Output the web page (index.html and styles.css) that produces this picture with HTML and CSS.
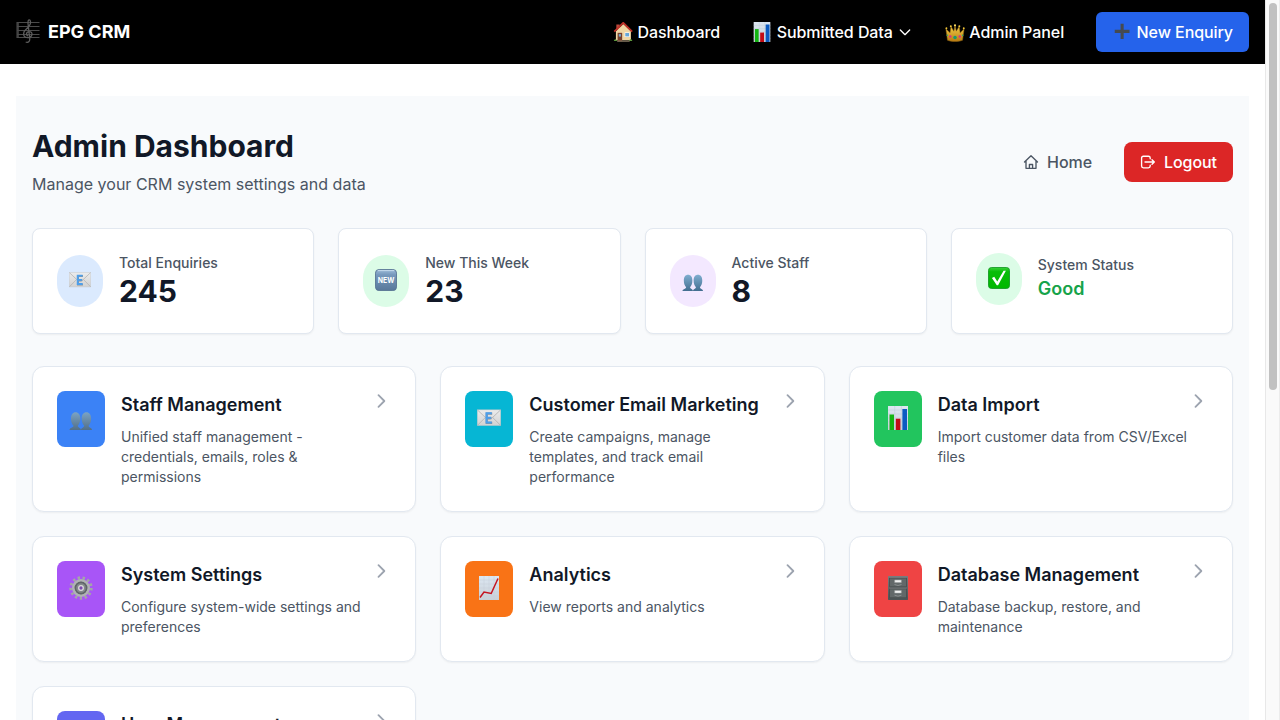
FILE: index.html
```html
<!DOCTYPE html>
<html lang="en">
<head>
<meta charset="utf-8">
<title>EPG CRM</title>
<link rel="stylesheet" href="styles.css">
</head>
<body>
<svg class="sprite" aria-hidden="true">
  <defs>
    <linearGradient id="g-blue" x1="0" y1="0" x2="0" y2="1"><stop offset="0" stop-color="#7faed0"/><stop offset="1" stop-color="#426d8f"/></linearGradient>
    <linearGradient id="g-slate" x1="0" y1="0" x2="0" y2="1"><stop offset="0" stop-color="#7ba3c4"/><stop offset="1" stop-color="#526f88"/></linearGradient>
    <linearGradient id="g-new" x1="0" y1="0" x2="0" y2="1"><stop offset="0" stop-color="#9dbbd8"/><stop offset=".25" stop-color="#7799bd"/><stop offset="1" stop-color="#58789a"/></linearGradient>
    <linearGradient id="g-paper" x1="0" y1="0" x2="0" y2="1"><stop offset="0" stop-color="#dce7f2"/><stop offset="1" stop-color="#c9d0d6"/></linearGradient>
    <linearGradient id="g-env" x1="0" y1="0" x2="0" y2="1"><stop offset="0" stop-color="#ececec"/><stop offset="1" stop-color="#d2d2d2"/></linearGradient>
    <linearGradient id="g-check" x1="0" y1="0" x2="0" y2="1"><stop offset="0" stop-color="#3bd03b"/><stop offset=".2" stop-color="#08bd08"/><stop offset="1" stop-color="#00b800"/></linearGradient>
    <linearGradient id="g-gold" x1="0" y1="0" x2="0" y2="1"><stop offset="0" stop-color="#f6d34a"/><stop offset="1" stop-color="#b87a12"/></linearGradient>
    <linearGradient id="g-cab" x1="0" y1="0" x2="0" y2="1"><stop offset="0" stop-color="#777d7f"/><stop offset="1" stop-color="#4d5355"/></linearGradient>
  </defs>
  <symbol id="score" viewBox="0 0 24 24">
    <path d="M1 3v16M2.200 3v16M.5 3.500h23M.5 7.500h23M.5 11.500h23M.5 15.500h23M.5 18.500h23" fill="none" stroke="#4a4a4a" stroke-width="1.100"/>
    <path d="M8 12.800C10 9.500 15 7.200 14.500 3c-.3-3.500-2.800-2.400-2.500 1.200l1.700 15c.4 3.600-1.600 4.800-4 3.800M8.200 12.500c-1.600 4 .4 6.300 3.700 6.100 5.200-.3 5.200-6.200 1.300-6-3.400.3-3.400 4-1 4.200" fill="none" stroke="#5c5c5c" stroke-width="1.300"/>
  </symbol>
  <symbol id="house" viewBox="0 0 24 24">
    <path d="M4 3h4v6H4z" fill="#b94a3c"/>
    <path d="M3.500 11 12.500 2.500 21.500 11v11h-18z" fill="#efd6a4"/>
    <path d="M1.500 11.500 12.300 1 23 11.500" fill="none" stroke="#bd3028" stroke-width="2.200"/>
    <path d="M5.500 13h5.500v10H5.500z" fill="#77402d"/><path d="M7 14.500h2.500v3H7z" fill="#79a9cc"/>
    <path d="M14 12.500h6v5.500h-6z" fill="#fff"/><path d="M14.700 13.200h4.600v4.100h-4.600z" fill="#66a7d8"/>
    <path d="M1 22.800c1-3 3-2.500 4 0M19 22.800c1-2.500 3.500-2.800 4.200 0" fill="#5e993d"/><path d="M5 23h15" stroke="#9b8a70" stroke-width="1.200"/>
  </symbol>
  <symbol id="bars" viewBox="0 0 24 24">
    <path d="M2 0h20v24H2z" fill="url(#g-paper)"/>
    <path d="M2 4h20M2 8h20M2 12h20M2 16h20M2 20h20M8.700 0v24M15.400 0v24" stroke="#bccbd9" stroke-width=".5"/>
    <path d="M3.500 8.500H8V24H3.500z" fill="#13b413"/><path d="M9.800 12.700h4.600V24H9.800z" fill="#c30c15"/><path d="M16.400 3H21v21h-4.600z" fill="#0b5bc2"/>
  </symbol>
  <symbol id="crown" viewBox="0 0 24 24">
    <path d="M3 22 1 8l5 5 1.200-7.500 3.500 5.500L12 4l1.500 7L17 5.500 18.200 13 23 8l-2 14c-5 2-13 2-18 0z" fill="url(#g-gold)" stroke="#8f6515" stroke-width=".6"/>
    <circle cx="1.700" cy="7.500" r="1.100" fill="#f0c539"/><circle cx="7" cy="5" r="1.200" fill="#f0c539"/><circle cx="12" cy="4" r="1.300" fill="#ffdf62"/><circle cx="17.200" cy="5" r="1.200" fill="#f0c539"/><circle cx="22.500" cy="7.500" r="1.100" fill="#f0c539"/>
    <circle cx="12" cy="18.500" r="2.100" fill="#139a75"/><circle cx="6.300" cy="17.500" r="1.500" fill="#d72f87"/><circle cx="17.700" cy="17.500" r="1.500" fill="#d72f87"/><circle cx="2.800" cy="16" r="1" fill="#2ba677"/><circle cx="21.200" cy="16" r="1" fill="#2ba677"/>
  </symbol>
  <symbol id="plus" viewBox="0 0 24 24"><path d="M10.300 2h3.700v7.400h7v3.700h-7v7.400h-3.700v-7.400h-7V9.400h7z" fill="#454a50"/></symbol>
  <symbol id="mail" viewBox="0 0 24 24">
    <path d="M.3 3.800h23.400v15.700H.3z" fill="url(#g-env)" stroke="#c4c4c4" stroke-width=".5"/>
    <path d="m.5 4 9 8.500q2.500 2 5 0l9-8.500M.5 19.300 8.300 11.500M23.500 19.300l-7.800-7.800" fill="none" stroke="#b0b0b0" stroke-width=".8"/>
    <path d="M15.200 7.700H9.800v9.100h5.400M10 12.200h4.500" fill="none" stroke="#8b9299" stroke-width="2.200"/>
    <path d="M14.800 7.300H9.500v9.100h5.300M9.700 11.800h4.500" fill="none" stroke="#4c9fec" stroke-width="2"/>
  </symbol>
  <symbol id="people" viewBox="0 0 24 24">
    <path d="M.5 24c0-2.400 4-2.200 4-4.200C2.700 18 2 15.500 2 12.500 2 8.500 3.800 6.200 6.600 6.200s4.700 2.300 4.700 6.300c0 3-.8 5.500-2.500 7.300 0 1.800 3 1.800 3.200 4.200zm11.500 0c.2-2.400 3.200-2.400 3.200-4.200-1.700-1.800-2.500-4.300-2.500-7.300 0-4 1.800-6.300 4.700-6.300 2.800 0 4.700 2.300 4.700 6.300 0 3-.8 5.500-2.500 7.300 0 2 3.400 1.800 3.400 4.200z"/>
  </symbol>
  <symbol id="check" viewBox="0 0 24 24">
    <rect x=".5" y=".5" width="23" height="23" rx="3.500" fill="url(#g-check)" stroke="#169b26"/>
    <path d="m4.300 12 2.500-1.300 3.300 5L17 4.200h2.500L11 20H9.600z" fill="#fff"/>
  </symbol>
  <symbol id="gear" viewBox="0 0 24 24">
    <circle cx="12" cy="12" r="10.200" fill="none" stroke="#a3a6a8" stroke-width="3" stroke-dasharray="2.400 2.530"/>
    <circle cx="12" cy="12" r="7.600" fill="#777c80" stroke="#b0b2b4" stroke-width="2.800"/>
    <circle cx="12" cy="12" r="5.600" fill="#84898c" stroke="#5f6568" stroke-width="1.600"/>
    <circle cx="12" cy="12" r="2.300" fill="#7d4bb0" stroke="#dcdcdc" stroke-width="1.300"/>
  </symbol>
  <symbol id="trend" viewBox="0 0 24 24">
    <path d="M2 0h20v24H2z" fill="url(#g-paper)"/>
    <path d="M2 4h20M2 8h20M2 12h20M2 16h20M2 20h20M7 0v24M12 0v24M17 0v24" stroke="#c5cfd8" stroke-width=".5"/>
    <path d="m3 21.500 4-5.500 7.200 1.500L21 2.500" fill="none" stroke="#c51521" stroke-width="1.500"/>
  </symbol>
  <symbol id="cabinet" viewBox="0 0 24 24">
    <rect x="2" y="0" width="20" height="24" rx=".7" fill="url(#g-cab)"/>
    <path d="M3.500 2h17v8.800h-17zM3.500 12.800h17v9h-17z" fill="#626869" stroke="#464b4d" stroke-width=".8"/>
    <path d="M3.500 1.500h17M3.500 12.300h17" stroke="#7d8283" stroke-width=".6"/>
    <path d="M8.700 4h6.600v2.600H8.700zM8.700 14.500h6.600v2.600H8.700z" fill="#f0f0f0" stroke="#9da1a2" stroke-width=".5"/>
    <path d="M8.500 8.500q3.500 2 7 0M8.500 19.200q3.500 2 7 0" fill="none" stroke="#8d9293" stroke-width=".9"/>
  </symbol>
  <symbol id="chevron" viewBox="0 0 24 24"><path d="m9 5 7 7-7 7" fill="none" stroke="currentColor" stroke-width="2.200" stroke-linecap="round" stroke-linejoin="round"/></symbol>
</svg>

<div class="page">
  <header class="navbar">
    <a class="brand"><svg class="brand-icon"><use href="#score"/></svg>EPG CRM</a>
    <nav class="nav-links">
      <a class="nav-link"><svg class="nav-icon"><use href="#house"/></svg>Dashboard</a>
      <a class="nav-link"><svg class="nav-icon"><use href="#bars"/></svg>Submitted Data<svg class="caret" viewBox="0 0 24 24"><path d="m5 9 7 7 7-7" fill="none" stroke="currentColor" stroke-width="2" stroke-linecap="round" stroke-linejoin="round"/></svg></a>
      <a class="nav-link"><svg class="nav-icon"><use href="#crown"/></svg>Admin Panel</a>
      <a class="nav-link new-enquiry"><svg class="nav-icon"><use href="#plus"/></svg>New Enquiry</a>
    </nav>
  </header>

  <main class="panel">
    <div class="panel-head">
      <div>
        <h1 class="title">Admin Dashboard</h1>
        <p class="subtitle">Manage your CRM system settings and data</p>
      </div>
      <div class="actions">
        <a class="action home"><svg class="action-icon" viewBox="0 0 16 16"><path d="M1.500 8 8 1.700 14.500 8M3 6.800v7.500h10V6.800M6.400 14.200v-3.700h3.200v3.700" fill="none" stroke="currentColor" stroke-width="1.350" stroke-linecap="round" stroke-linejoin="round"/></svg>Home</a>
        <a class="action logout"><svg class="action-icon" viewBox="0 0 16 16"><path d="M10.200 4.800V4q0-1.800-1.800-1.800h-5Q1.600 2.200 1.600 4v8q0 1.800 1.800 1.800h5q1.800 0 1.800-1.800v-.8M5 8h9.300M12 5.700 14.300 8 12 10.300" fill="none" stroke="currentColor" stroke-width="1.350" stroke-linecap="round" stroke-linejoin="round"/></svg>Logout</a>
      </div>
    </div>

    <section class="stats">
      <div class="stat"><span class="bubble blue-soft"><svg><use href="#mail"/></svg></span><div><p class="stat-label">Total Enquiries</p><p class="stat-value">245</p></div></div>
      <div class="stat">
        <span class="bubble green-soft"><svg viewBox="0 0 24 24">
          <rect x=".5" y=".5" width="23" height="23" rx="4" fill="url(#g-new)" stroke="#587493"/>
          <path d="M3 1.700h18" stroke="#bfd5e9" stroke-width="1.200"/>
          <text x="12" y="15.200" text-anchor="middle" textLength="18" lengthAdjust="spacingAndGlyphs" class="new-label">NEW</text>
        </svg></span>
        <div><p class="stat-label">New This Week</p><p class="stat-value">23</p></div>
      </div>
      <div class="stat"><span class="bubble purple-soft"><svg fill="url(#g-blue)"><use href="#people"/></svg></span><div><p class="stat-label">Active Staff</p><p class="stat-value">8</p></div></div>
      <div class="stat"><span class="bubble green-soft"><svg><use href="#check"/></svg></span><div><p class="stat-label">System Status</p><p class="stat-status">Good</p></div></div>
    </section>

    <section class="modules">
      <a class="module"><span class="tile blue"><svg fill="url(#g-slate)"><use href="#people"/></svg></span><div class="module-text"><h3>Staff Management</h3><p>Unified staff management - credentials, emails, roles &amp; permissions</p></div><svg class="chevron"><use href="#chevron"/></svg></a>
      <a class="module"><span class="tile cyan"><svg><use href="#mail"/></svg></span><div class="module-text"><h3>Customer Email Marketing</h3><p>Create campaigns, manage templates, and track email performance</p></div><svg class="chevron"><use href="#chevron"/></svg></a>
      <a class="module"><span class="tile green"><svg><use href="#bars"/></svg></span><div class="module-text"><h3>Data Import</h3><p>Import customer data from CSV/Excel files</p></div><svg class="chevron"><use href="#chevron"/></svg></a>
      <a class="module"><span class="tile purple"><svg><use href="#gear"/></svg></span><div class="module-text"><h3>System Settings</h3><p>Configure system-wide settings and preferences</p></div><svg class="chevron"><use href="#chevron"/></svg></a>
      <a class="module"><span class="tile orange"><svg><use href="#trend"/></svg></span><div class="module-text"><h3>Analytics</h3><p>View reports and analytics</p></div><svg class="chevron"><use href="#chevron"/></svg></a>
      <a class="module"><span class="tile red"><svg><use href="#cabinet"/></svg></span><div class="module-text"><h3>Database Management</h3><p>Database backup, restore, and maintenance</p></div><svg class="chevron"><use href="#chevron"/></svg></a>
      <a class="module"><span class="tile indigo"></span><div class="module-text"><h3>User Management</h3></div><svg class="chevron"><use href="#chevron"/></svg></a>
    </section>
  </main>
</div>
<div class="scrollbar"><div class="thumb"></div></div>
</body>
</html>
```

FILE: styles.css
```css
* { box-sizing: border-box; margin: 0; padding: 0; }
body {
  display: flex;
  width: 1280px;
  height: 720px;
  overflow: hidden;
  background: #fff;
  color: #111827;
  font: 16px/24px Inter, sans-serif;
}
svg { display: block; flex: none; }
.sprite { position: absolute; width: 0; height: 0; }
.page { width: 1265px; height: 720px; overflow: hidden; }

.navbar {
  display: flex;
  align-items: center;
  justify-content: space-between;
  height: 64px;
  padding: 0 16px;
  background: #000;
  color: #fff;
}
.brand { display: flex; align-items: center; gap: 8px; font-size: 18px; line-height: 28px; font-weight: 700; }
.brand-icon { width: 24px; height: 24px; margin-top: -2px; }
.nav-links { display: flex; align-items: center; gap: 32px; font-weight: 500; letter-spacing: -.075px; }
.nav-link { display: flex; align-items: center; }
.nav-icon { width: 20px; height: 20px; margin-right: 4.500px; }
.caret { width: 16px; height: 16px; margin-left: 4px; }
.new-enquiry { height: 40px; padding: 0 16px; border-radius: 6px; background: #2563eb; }

.panel { margin: 32px 16px; padding: 32px 16px; background: #f8fafc; }
.panel-head { display: flex; align-items: center; justify-content: space-between; margin-bottom: 32px; }
.title { font-size: 30px; line-height: 36px; font-weight: 700; margin-bottom: 8px; }
.subtitle { color: #4b5563; letter-spacing: .012px; }
.actions { display: flex; gap: 16px; font-weight: 500; letter-spacing: -.06px; }
.action { display: flex; align-items: center; gap: 8px; height: 40px; padding: 0 16px; border-radius: 8px; }
.action-icon { width: 16px; height: 16px; }
.home { color: #4b5563; }
.logout { background: #dc2626; color: #fff; }

.stats { display: grid; grid-template-columns: repeat(4, 1fr); gap: 24px; margin-bottom: 32px; }
.stat, .module {
  display: flex;
  padding: 24px;
  background: #fff;
  border: 1px solid #e2e8f0;
  box-shadow: 0 1px 2px rgba(0, 0, 0, .05);
}
.stat { height: 106px; align-items: flex-start; gap: 16px; border-radius: 8px; }
.bubble { display: flex; align-items: center; justify-content: center; width: 46px; height: 52px; margin-top: 2px; padding-bottom: 2px; border-radius: 23px; }
.bubble svg { width: 22px; height: 22px; }
.stat:last-child .bubble { margin-top: 0; }
.stat:last-child > div { margin-top: 2px; }
.blue-soft { background: #dbeafe; }
.green-soft { background: #dcfce7; }
.purple-soft { background: #f3e8ff; }
.stat-label { font-size: 14px; line-height: 20px; font-weight: 500; color: #4b5563; }
.stat-value { font-size: 30px; line-height: 36px; font-weight: 700; }
.stat-status { font-size: 18px; line-height: 28px; font-weight: 600; color: #16a34a; }
.new-label { font: 700 8.500px Inter, sans-serif; fill: #fff; }

.modules { display: grid; grid-template-columns: repeat(3, 1fr); gap: 24px; }
.module { align-items: flex-start; border-radius: 12px; }
.tile { display: flex; align-items: center; justify-content: center; flex: none; width: 48px; height: 56px; margin-right: 16px; padding-bottom: 2px; border-radius: 8px; }
.tile svg { width: 24px; height: 24px; }
.module-text { flex: 1; min-width: 0; }
.module-text h3 { font-size: 18px; line-height: 28px; font-weight: 600; margin-bottom: 8px; }
.module-text p { font-size: 14px; line-height: 20px; color: #4b5563; }
.chevron { width: 20px; height: 20px; color: #9ca3af; }
.blue { background: #3b82f6; }
.cyan { background: #06b6d4; }
.green { background: #22c55e; }
.purple { background: #a855f7; }
.orange { background: #f97316; }
.red { background: #ef4444; }
.indigo { background: #6366f1; }

.scrollbar { width: 15px; height: 720px; padding: 3px 2px 0 3px; background: #fafafa; border-left: 1px solid #e8e8e8; border-right: 1px solid #ececec; }
.thumb { width: 8px; height: 387px; border-radius: 4px; background: #c1c1c1; }
```
